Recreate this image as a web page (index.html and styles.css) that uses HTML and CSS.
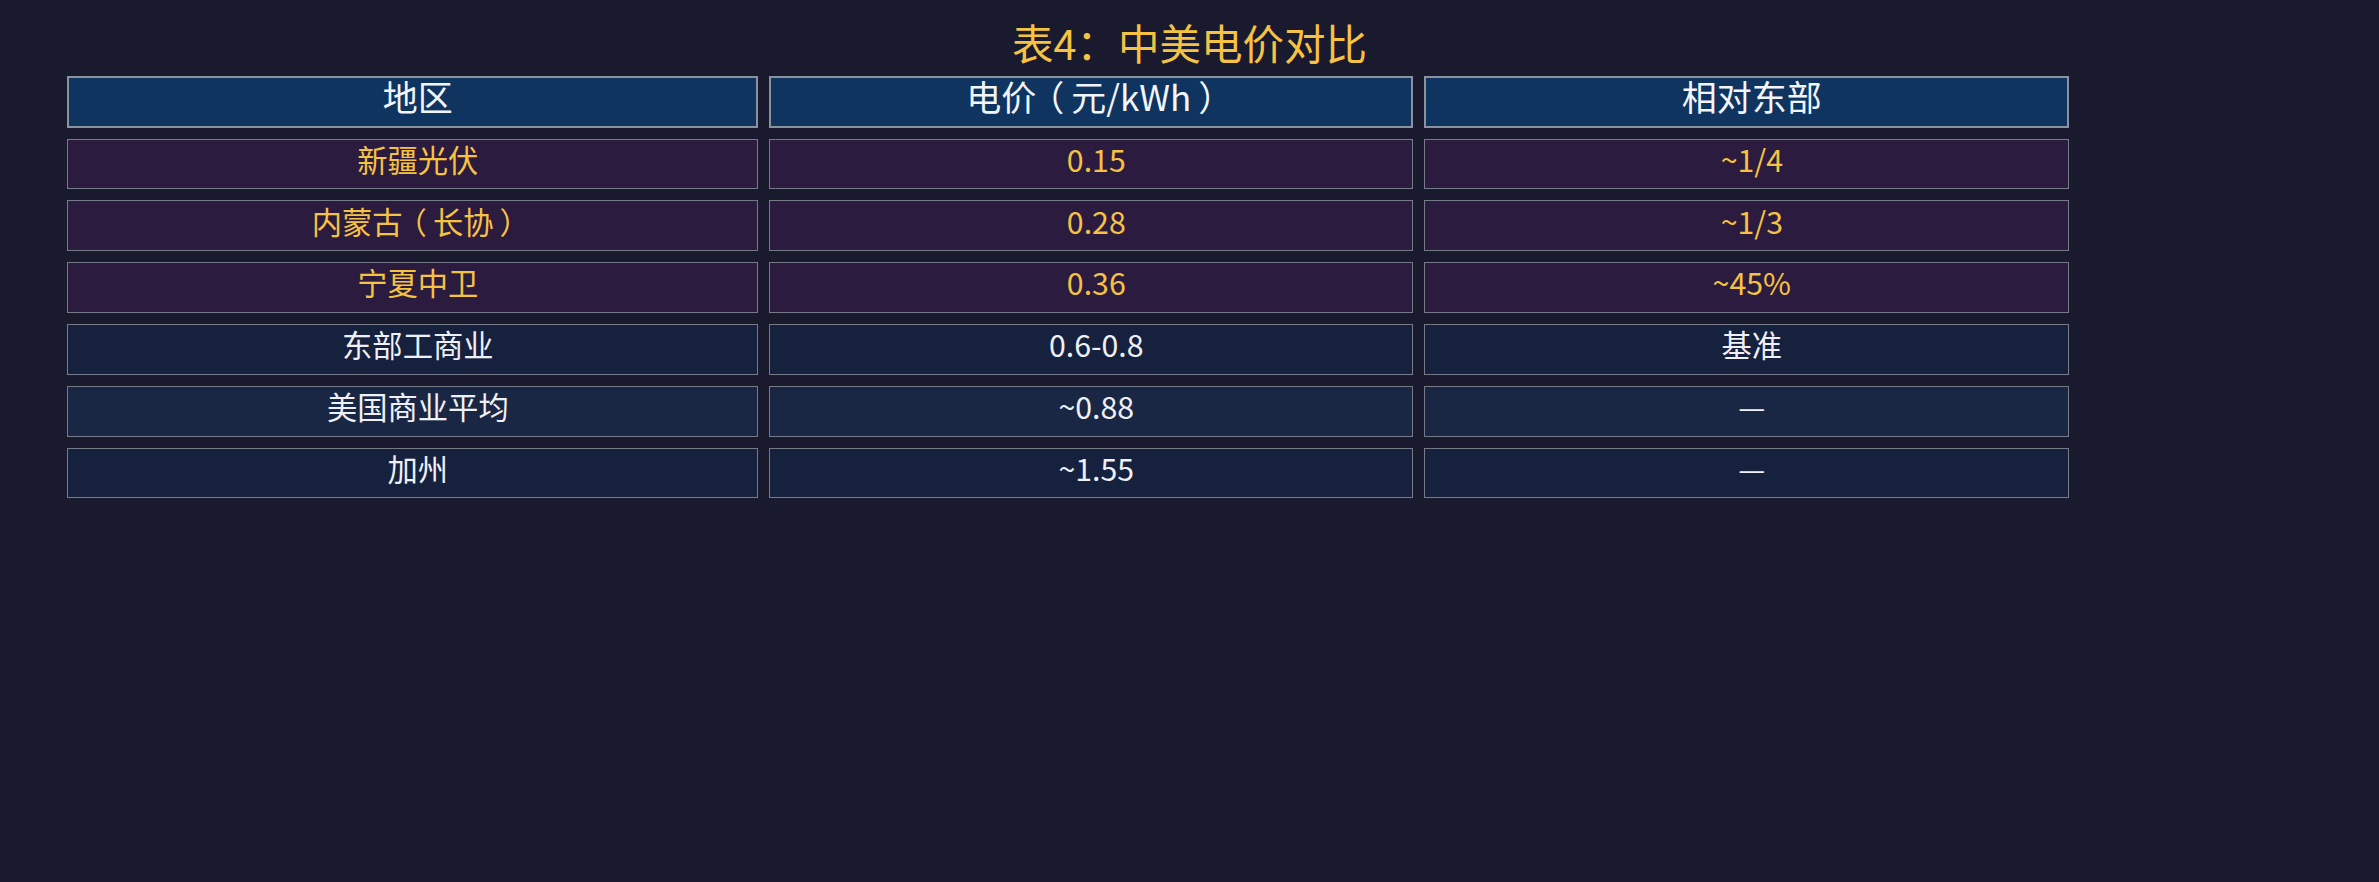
FILE: index.html
```html
<!DOCTYPE html>
<html lang="zh-CN">
<head>
<meta charset="utf-8">
<title>表4：中美电价对比</title>
<link rel="stylesheet" href="styles.css">
</head>
<body>
<div class="title">表4：中美电价对比</div>
<table class="price-table">
  <thead>
    <tr>
      <th class="c1">地区</th>
      <th class="c2">电价<span class="lp">（</span>元/kWh<span class="rp">）</span></th>
      <th class="c3">相对东部</th>
    </tr>
  </thead>
  <tbody>
    <tr class="hl"><td>新疆光伏</td><td>0.15</td><td>~1/4</td></tr>
    <tr class="hl"><td>内蒙古<span class="lp">（</span>长协<span class="rp">）</span></td><td>0.28</td><td>~1/3</td></tr>
    <tr class="hl"><td>宁夏中卫</td><td>0.36</td><td>~45%</td></tr>
    <tr class="plain"><td>东部工商业</td><td>0.6-0.8</td><td>基准</td></tr>
    <tr class="plain alt"><td>美国商业平均</td><td>~0.88</td><td>—</td></tr>
    <tr class="plain"><td>加州</td><td>~1.55</td><td>—</td></tr>
  </tbody>
</table>
</body>
</html>
```
FILE: styles.css
```css
html, body {
  margin: 0;
  padding: 0;
}
body {
  background: #1a1a2e;
  font-family: "Noto Sans CJK SC", "Noto Sans", sans-serif;
  width: 2379px;
  height: 882px;
  overflow: hidden;
}
.title {
  text-align: center;
  color: #f5c242;
  font-size: 41.5px;
  line-height: 50px;
  padding-top: 17px;
  height: 48px;
}
.price-table {
  margin-left: 56px;
  border-collapse: separate;
  border-spacing: 11px 11px;
  table-layout: fixed;
}
.price-table th,
.price-table td {
  box-sizing: border-box;
  text-align: center;
  vertical-align: top;
  padding: 0 0 0 10.6px;
}
.price-table th {
  background: #0f3460;
  color: #f2f5fa;
  border: 2px solid #8a929c;
  font-weight: 400;
  font-size: 35px;
  line-height: 34.4px;
  height: 51.6px;
  padding-top: 0.6px;
}
.price-table th.c1 { width: 691px; }
.price-table th.c2 { width: 644px; }
.price-table th.c3 { width: 645px; }
.price-table td {
  border: 1px solid #767c87;
  font-size: 30.3px;
  line-height: 36px;
  height: 50.8px;
  padding-top: 1.3px;
}
/* fullwidth brackets drawn centred in their em box */
.lp,
.rp {
  font-feature-settings: "halt" 1;
}
.lp {
  padding-left: 0.3em;
  padding-right: 0.2em;
}
.rp {
  padding-left: 0.2em;
  padding-right: 0.3em;
}
.price-table tr.hl td {
  background: #2b1b3f;
  color: #f5c242;
}
.price-table tr.plain td {
  background: #16213e;
  color: #eef0f5;
}
.price-table tr.plain.alt td {
  background: #1a2744;
}
```
